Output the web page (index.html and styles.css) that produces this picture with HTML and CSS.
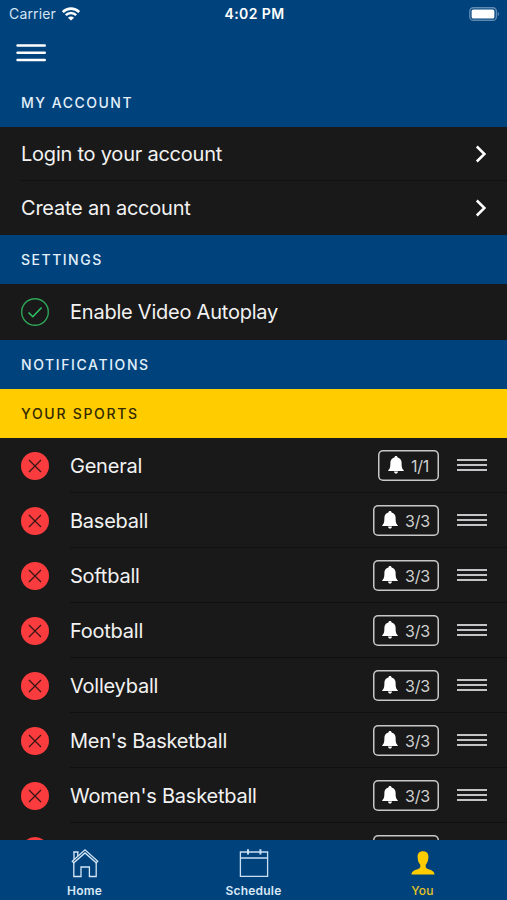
FILE: index.html
```html
<!DOCTYPE html>
<html lang="en">
<head>
    <meta charset="UTF-8">
    <meta name="viewport" content="width=device-width, initial-scale=1.0">
    <title>You</title>
    <link rel="stylesheet" href="styles.css">
</head>
<body>
    <!-- Shared icons -->
    <svg class="sprite" width="0" height="0">
        <symbol id="chevron" viewBox="0 0 12 18">
            <path d="M1.8 1.5L9.4 9L1.8 16.5" fill="none" stroke="#fff" stroke-width="2.5"/>
        </symbol>
        <symbol id="remove" viewBox="0 0 28 28">
            <circle cx="14" cy="14" r="14" fill="#fb3c3e"/>
            <path d="M8 8L20 20M20 8L8 20" stroke="#351414" stroke-width="1.2"/>
        </symbol>
        <symbol id="bell" viewBox="0 0 15 17">
            <path d="M7.5 0C8.4 0 9 0.6 9 1.4C11.6 2 12.8 4 12.8 6.4C12.8 10.5 13.2 12.1 14.9 13.6V14.2H0.1V13.6C1.8 12.1 2.2 10.5 2.2 6.4C2.2 4 3.4 2 6 1.4C6 0.6 6.6 0 7.5 0ZM5.6 14.6H9.4C9.3 15.8 8.5 16.5 7.5 16.5C6.5 16.5 5.7 15.8 5.6 14.6Z" fill="#fff"/>
        </symbol>
        <symbol id="drag" viewBox="0 0 30 12">
            <path d="M0 1H30M0 6H30M0 11H30" stroke="#c4c4c6" stroke-width="1.8"/>
        </symbol>
    </svg>

    <div class="screen">
        <header>
            <div class="status-bar">
                <div class="carrier">
                    <span>Carrier</span>
                    <svg width="18" height="14" viewBox="0 0 18 14">
                        <path d="M0.8 5C5.5 0.5 12.5 0.5 17.2 5" fill="none" stroke="#fff" stroke-width="2.7"/>
                        <path d="M3.8 8.2C6.8 5.3 11.2 5.3 14.2 8.2" fill="none" stroke="#fff" stroke-width="2.4"/>
                        <path d="M9 13.6L5.9 10.7C7.7 9 10.3 9 12.1 10.7Z" fill="#fff"/>
                    </svg>
                </div>
                <div class="time">4:02 PM</div>
                <svg class="battery" width="31" height="14" viewBox="0 0 31 14">
                    <rect x="0.8" y="0.7" width="26.6" height="12.6" rx="3.6" fill="none" stroke="#5f8ab3" stroke-width="1.4"/>
                    <rect x="2.6" y="2.4" width="22.8" height="9.2" rx="1.6" fill="#fff"/>
                    <path d="M28.8 5C30.6 5.6 30.6 8.4 28.8 9Z" fill="#5f8ab3"/>
                </svg>
            </div>
            <svg class="menu" width="30" height="18" viewBox="0 0 30 18">
                <path d="M1.5 1.5H28.8M1.5 8.7H28.8M1.5 16H28.8" stroke="#fff" stroke-width="2.4" stroke-linecap="round"/>
            </svg>
        </header>

        <main>
            <h2>MY ACCOUNT</h2>
            <div class="row link">
                <span class="login">Login to your account</span>
                <svg class="chevron"><use href="#chevron"/></svg>
            </div>
            <div class="row link last">
                <span class="create">Create an account</span>
                <svg class="chevron"><use href="#chevron"/></svg>
            </div>

            <h2>SETTINGS</h2>
            <div class="row setting">
                <svg class="round" viewBox="0 0 28 28">
                    <circle cx="14" cy="14" r="13.3" fill="none" stroke="#2fa557" stroke-width="1.4"/>
                    <path d="M7.5 14.5L11.8 18.7L20.6 9.5" fill="none" stroke="#2fc463" stroke-width="1.6"/>
                </svg>
                <span class="name">Enable Video Autoplay</span>
            </div>

            <h2 class="notifications">NOTIFICATIONS</h2>
            <h2 class="sports">YOUR SPORTS</h2>
            <div class="row sport">
                <svg class="round"><use href="#remove"/></svg>
                <span class="name">General</span>
                <span class="count one"><svg class="bell"><use href="#bell"/></svg>1/1</span>
                <svg class="drag"><use href="#drag"/></svg>
            </div>
            <div class="row sport">
                <svg class="round"><use href="#remove"/></svg>
                <span class="name">Baseball</span>
                <span class="count"><svg class="bell"><use href="#bell"/></svg>3/3</span>
                <svg class="drag"><use href="#drag"/></svg>
            </div>
            <div class="row sport">
                <svg class="round"><use href="#remove"/></svg>
                <span class="name">Softball</span>
                <span class="count"><svg class="bell"><use href="#bell"/></svg>3/3</span>
                <svg class="drag"><use href="#drag"/></svg>
            </div>
            <div class="row sport">
                <svg class="round"><use href="#remove"/></svg>
                <span class="name">Football</span>
                <span class="count"><svg class="bell"><use href="#bell"/></svg>3/3</span>
                <svg class="drag"><use href="#drag"/></svg>
            </div>
            <div class="row sport">
                <svg class="round"><use href="#remove"/></svg>
                <span class="name">Volleyball</span>
                <span class="count"><svg class="bell"><use href="#bell"/></svg>3/3</span>
                <svg class="drag"><use href="#drag"/></svg>
            </div>
            <div class="row sport">
                <svg class="round"><use href="#remove"/></svg>
                <span class="name">Men's Basketball</span>
                <span class="count"><svg class="bell"><use href="#bell"/></svg>3/3</span>
                <svg class="drag"><use href="#drag"/></svg>
            </div>
            <div class="row sport">
                <svg class="round"><use href="#remove"/></svg>
                <span class="name">Women's Basketball</span>
                <span class="count"><svg class="bell"><use href="#bell"/></svg>3/3</span>
                <svg class="drag"><use href="#drag"/></svg>
            </div>
            <!-- Partly scrolled under the tab bar -->
            <div class="row sport">
                <svg class="round"><use href="#remove"/></svg>
                <span class="name"></span>
                <span class="count cut"></span>
                <svg class="drag"><use href="#drag"/></svg>
            </div>
        </main>

        <nav>
            <div class="tab">
                <svg width="30" height="30" viewBox="0 0 30 30" fill="none" stroke="#d5e6f6" stroke-width="1.3">
                    <path d="M2.3 13.2L15 1.8L27.7 13.2L26.2 14.8L15 4.9L3.8 14.8Z"/>
                    <path d="M4 11.5V4H7.8V8M3.2 4H8.6"/>
                    <path d="M3.8 14.8V28.5H11V19H19.4V28.5H26.2V14.8"/>
                </svg>
                <span>Home</span>
            </div>
            <div class="tab">
                <svg width="30" height="30" viewBox="0 0 30 30" fill="none" stroke="#c9e0f4" stroke-width="1.3">
                    <path d="M1.4 4H28.6V28.4H1.4ZM1.4 10H28.6"/>
                    <path d="M9 1.2V6.6M21.4 1.2V6.6" stroke-width="2"/>
                </svg>
                <span>Schedule</span>
            </div>
            <div class="tab active">
                <svg width="30" height="30" viewBox="0 0 30 30">
                    <path d="M15 3.2C18.6 3.2 20.4 5.3 20.4 8.8C20.4 12.4 19.3 15.1 17.8 16.6C17.5 19.4 17.8 20.2 19.8 21C23.5 22.2 26 23 26.6 26.6H3.4C4 23 6.5 22.2 10.2 21C12.2 20.2 12.5 19.4 12.2 16.6C10.7 15.1 9.6 12.4 9.6 8.8C9.6 5.3 11.4 3.2 15 3.2Z" fill="#ffcc00"/>
                </svg>
                <span>You</span>
            </div>
        </nav>
    </div>
</body>
</html>
```
FILE: styles.css
```css
* {
    box-sizing: border-box;
}
body {
    margin: 0;
    font-family: Inter, "Liberation Sans", sans-serif;
    background-color: #191919;
    color: #f2f2f2;
}
svg {
    display: block;
    flex-shrink: 0;
}
.sprite {
    position: absolute;
}
.screen {
    height: 900px;
    display: flex;
    flex-direction: column;
    overflow: hidden;
}
header {
    height: 78px;
    flex-shrink: 0;
    background-color: #00437c;
}
.status-bar {
    height: 27px;
    padding: 0 7px 0 9px;
    display: grid;
    grid-template-columns: 1fr auto 1fr;
    align-items: center;
    font-size: 14px;
}
.carrier {
    display: flex;
    align-items: center;
    gap: 6px;
    letter-spacing: 0.15px;
    color: #d3e4f3;
}
.time {
    font-weight: 600;
    letter-spacing: 0.4px;
    color: #fff;
}
.battery {
    justify-self: end;
}
.menu {
    margin: 17px 0 0 16px;
}
main {
    flex: 1;
    min-height: 0;
    overflow: hidden;
}
h2 {
    height: 49px;
    margin: 0;
    padding-left: 21px;
    line-height: 49px;
    font-size: 14px;
    font-weight: 500;
    letter-spacing: 1.5px;
    background-color: #00437c;
    color: #e3f0fb;
}
h2.notifications {
    letter-spacing: 1.6px;
}
h2.sports {
    letter-spacing: 1.7px;
    background-color: #ffcc00;
    color: #332900;
}
.row {
    height: 55px;
    display: flex;
    align-items: center;
    font-size: 20px;
    letter-spacing: -0.23px;
}
.link {
    height: 54px;
    padding: 0 20px 0 21px;
    justify-content: space-between;
    background: linear-gradient(#101010, #101010) 21px 100% / 100% 1px no-repeat;
}
.link.last {
    background: none;
}
.setting, .sport {
    padding: 0 19px 0 21px;
}
.setting {
    height: 56px;
}
.sport {
    background: linear-gradient(#101010, #101010) 70px 100% / 100% 1px no-repeat;
}
.chevron {
    width: 12px;
    height: 18px;
}
.round {
    width: 28px;
    height: 28px;
    margin-right: 21px;
}
.name {
    flex: 1;
}
.count {
    width: 66px;
    height: 31px;
    padding-top: 1px;
    display: flex;
    align-items: center;
    justify-content: center;
    gap: 7px;
    box-shadow: inset 0 0 0 1.5px #c8c8ca;
    border-radius: 5px;
    font-size: 16px;
    color: #d0d0d0;
}
.count.one {
    width: 61px;
}
.bell {
    width: 16px;
    height: 18px;
    margin-top: -2px;
}
.drag {
    width: 30px;
    height: 12px;
    margin: -2px 0 0 18px;
}
.sport .count {
    margin-right: 1px;
}
.sport .drag {
    margin-right: 1px;
    margin-left: 17px;
}
nav {
    height: 60px;
    flex-shrink: 0;
    display: flex;
    background-color: #00437c;
}
.tab {
    flex: 1;
    display: flex;
    flex-direction: column;
    align-items: center;
    padding-top: 8px;
    font-size: 12px;
    line-height: 15px;
    font-weight: 600;
    letter-spacing: 0.2px;
    color: #d9e8f6;
}
.tab span {
    margin-top: 5px;
}
.tab.active {
    font-weight: 500;
    color: #e8c51c;
}
```
